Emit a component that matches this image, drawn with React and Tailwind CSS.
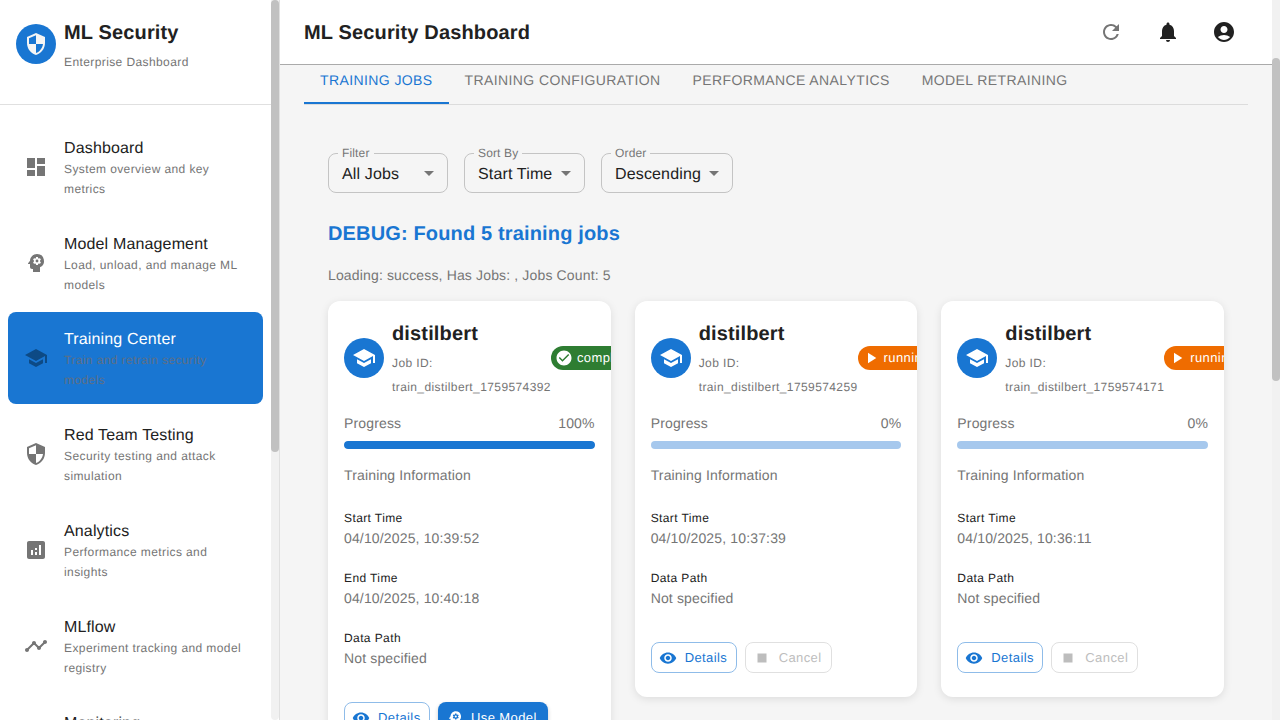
import React from 'react';
import {
  MdDashboard, MdPsychology, MdSchool, MdSecurity, MdAnalytics, MdTimeline, MdMonitorHeart,
  MdRefresh, MdNotifications, MdAccountCircle, MdVisibility, MdStop, MdPlayArrow, MdCheckCircle, MdArrowDropDown,
} from 'react-icons/md';

const navItems = [
  { icon: MdDashboard, title: 'Dashboard', sub: 'System overview and key metrics' },
  { icon: MdPsychology, title: 'Model Management', sub: 'Load, unload, and manage ML models' },
  { icon: MdSchool, title: 'Training Center', sub: 'Train and retrain security models', active: true },
  { icon: MdSecurity, title: 'Red Team Testing', sub: 'Security testing and attack simulation' },
  { icon: MdAnalytics, title: 'Analytics', sub: 'Performance metrics and insights' },
  { icon: MdTimeline, title: 'MLflow', sub: 'Experiment tracking and model registry' },
  { icon: MdMonitorHeart, title: 'Monitoring', sub: 'System health and live metrics' },
];

const jobs = [
  {
    id: 'train_distilbert_1759574392', status: 'completed', progress: 100,
    info: [['Start Time', '04/10/2025, 10:39:52'], ['End Time', '04/10/2025, 10:40:18'], ['Data Path', 'Not specified']],
  },
  {
    id: 'train_distilbert_1759574259', status: 'running', progress: 0,
    info: [['Start Time', '04/10/2025, 10:37:39'], ['Data Path', 'Not specified']],
  },
  {
    id: 'train_distilbert_1759574171', status: 'running', progress: 0,
    info: [['Start Time', '04/10/2025, 10:36:11'], ['Data Path', 'Not specified']],
  },
];

function NavItem({ icon: Icon, title, sub, active }) {
  return (
    <div className={`flex h-[92px] shrink-0 items-center rounded-lg pl-4 pr-4 ${active ? 'bg-[#1976d2]' : ''}`}>
      <div className="flex w-10 shrink-0 items-center">
        <Icon size={24} className={active ? 'text-[#0d4a85]' : 'text-[#757575]'} />
      </div>
      <div className="min-w-0 flex-1 self-start pt-[18px]">
        <div className={`text-base leading-[19.9px] tracking-[0.15px] ${active ? 'text-white' : 'text-[#212121]'}`}>{title}</div>
        <div className={`text-xs leading-5 tracking-[0.4px] ${active ? 'text-[#5f6f85]' : 'text-[#757575]'}`}>{sub}</div>
      </div>
    </div>
  );
}

function Sidebar() {
  return (
    <aside className="flex h-full w-[280px] shrink-0 border-r border-[#e0e0e0] bg-white">
      <div className="flex min-w-0 flex-1 flex-col overflow-hidden">
        <div className="flex h-[105px] shrink-0 items-start gap-2 border-b border-[#e0e0e0] pl-4 pt-4">
          <div className="mt-2 flex h-10 w-10 shrink-0 items-center justify-center rounded-full bg-[#1976d2]">
            <MdSecurity size={24} className="text-[#f5f5f5]" />
          </div>
          <div>
            <div className="pt-[2px] text-xl font-semibold leading-[30px] tracking-[0.15px] text-[#212121]">ML Security</div>
            <div className="mt-[4px] text-xs leading-5 tracking-[0.4px] text-[#757575]">Enterprise Dashboard</div>
          </div>
        </div>
        <nav className="flex flex-col gap-[3.8px] px-2 pt-[15.8px]">
          {navItems.map((item) => <NavItem key={item.title} {...item} />)}
        </nav>
      </div>
      <div className="h-full w-2 shrink-0 rounded-b bg-[#f1f1f1]">
        <div className="h-[452px] w-2 rounded bg-[#c1c1c1]" />
      </div>
    </aside>
  );
}

function Header() {
  return (
    <header className="z-10 flex h-[65px] shrink-0 items-center justify-between border-b border-[#aaaaaa] bg-white pl-6 pr-7">
      <h1 className="pt-[2px] text-xl font-semibold tracking-[0.15px] text-[#212121]">ML Security Dashboard</h1>
      <div className="flex items-center gap-4">
        <div className="mr-[1px] flex h-10 w-10 items-center justify-center"><MdRefresh size={24} className="text-[#757575]" /></div>
        <div className="flex h-10 w-10 items-center justify-center"><MdNotifications size={24} className="text-[#212121]" /></div>
        <div className="flex h-10 w-10 items-center justify-center"><MdAccountCircle size={24} className="text-[#212121]" /></div>
      </div>
    </header>
  );
}

function Tabs() {
  const tabs = ['Training Jobs', 'Training Configuration', 'Performance Analytics', 'Model Retraining'];
  return (
    <div className="flex h-[40px] shrink-0 border-b border-[#dcdcdc]">
      {tabs.map((t, i) => (
        <div
          key={t}
          className={`flex h-[39px] items-start px-4 pt-[5px] text-sm uppercase leading-5 tracking-[0.4px] ${i === 0 ? 'border-b-2 border-[#1976d2] text-[#1976d2]' : 'text-[#757575]'}`}
        >
          {t}
        </div>
      ))}
    </div>
  );
}

function Select({ label, value, width }) {
  return (
    <div className={`relative flex h-10 items-center justify-between rounded-lg border border-[#c4c4c4] pl-[13px] pr-[6px] ${width}`}>
      <span className="absolute -top-[8px] left-[9px] bg-[#f5f5f5] px-[4px] text-xs leading-[14px] tracking-[0.15px] text-[#757575]">{label}</span>
      <span className="pt-[4px] text-base tracking-[0.15px] text-[#212121]">{value}</span>
      <MdArrowDropDown size={24} className="text-[#757575]" />
    </div>
  );
}

function OutlinedButton({ icon: Icon, children, disabled }) {
  return (
    <div className={`flex h-[31px] items-center gap-2 rounded-lg border pl-[7px] text-[13px] tracking-[0.4px] ${disabled ? 'w-[87px] border-[#e0e0e0] text-[#bdbdbd]' : 'w-[86px] border-[#8fbce9] text-[#1976d2]'}`}>
      <Icon size={18} />
      <span>{children}</span>
    </div>
  );
}

function StatusChip({ status }) {
  const done = status === 'completed';
  return (
    <div className={`flex h-6 shrink-0 items-center gap-1 rounded-full pl-1 pr-3 text-[13px] tracking-[0.4px] text-white ${done ? 'bg-[#2e7d32]' : 'bg-[#ef6c00]'}`}>
      {done ? <MdCheckCircle size={18} /> : <MdPlayArrow size={18} />}
      <span>{status}</span>
    </div>
  );
}

function JobCard({ job }) {
  const done = job.status === 'completed';
  return (
    <div className="overflow-hidden rounded-xl bg-white px-4 pb-6 pt-4 shadow-[0_2px_8px_rgba(0,0,0,0.1)]">
      <div className="flex w-[300px] items-center">
        <div className="flex h-10 w-10 shrink-0 items-center justify-center rounded-full bg-[#1976d2]">
          <MdSchool size={24} className="text-white" />
        </div>
        <div className="ml-2 shrink-0">
          <div className="pt-[2px] text-xl font-semibold leading-[30px] tracking-[0.15px] text-[#212121]">distilbert</div>
          <div className="mt-[2px] text-xs leading-6 tracking-[0.4px] text-[#757575]">Job ID:</div>
          <div className="text-xs leading-6 tracking-[0.4px] text-[#757575]">{job.id}</div>
        </div>
        <StatusChip status={job.status} />
      </div>

      <div className="mt-4 flex h-4 items-center justify-between text-sm tracking-[0.15px] text-[#757575]">
        <span>Progress</span>
        <span>{job.progress}%</span>
      </div>
      <div className="mt-[10px] h-2 overflow-hidden rounded bg-[#a6c8ed]">
        <div className="h-full rounded bg-[#1976d2]" style={{ width: `${job.progress}%` }} />
      </div>

      <div className="mt-[14px] text-sm leading-6 tracking-[0.15px] text-[#757575]">Training Information</div>

      <div className="mt-[21px] flex flex-col gap-5">
        {job.info.map(([k, v]) => (
          <div key={k}>
            <div className="text-xs leading-5 tracking-[0.4px] text-[#212121]">{k}</div>
            <div className="text-sm leading-5 tracking-[0.15px] text-[#757575]">{v}</div>
          </div>
        ))}
      </div>

      <div className="mt-[34px] flex gap-2">
        <OutlinedButton icon={MdVisibility}>Details</OutlinedButton>
        {done ? (
          <div className="flex h-[31px] w-[110px] items-center gap-[7px] rounded-lg bg-[#1976d2] pl-[8px] text-[13px] tracking-[0.4px] text-white shadow-[0_2px_4px_rgba(0,0,0,0.2)]">
            <MdPsychology size={18} />
            <span>Use Model</span>
          </div>
        ) : (
          <OutlinedButton icon={MdStop} disabled>Cancel</OutlinedButton>
        )}
      </div>
    </div>
  );
}

function Main() {
  return (
    <div className="flex min-w-0 flex-1 flex-col overflow-hidden bg-[#f5f5f5]">
      <Header />
      <div className="flex flex-1 flex-col overflow-hidden px-6">
        <Tabs />
        <div className="px-6 pt-[48px]">
          <div className="flex gap-4">
            <Select label="Filter" value="All Jobs" width="w-[120px]" />
            <Select label="Sort By" value="Start Time" width="w-[121px]" />
            <Select label="Order" value="Descending" width="w-[132px]" />
          </div>
          <h2 className="mt-6 pt-[2px] text-xl font-semibold leading-[30px] tracking-[0.15px] text-[#1976d2]">DEBUG: Found 5 training jobs</h2>
          <p className="mt-4 text-sm leading-5 tracking-[0.15px] text-[#757575]">Loading: success, Has Jobs: , Jobs Count: 5</p>
          <div className="mt-4 grid grid-cols-3 items-start gap-6">
            {jobs.map((j) => <JobCard key={j.id} job={j} />)}
          </div>
        </div>
      </div>
    </div>
  );
}

export default function App() {
  return (
    <div className="flex h-[720px] w-[1280px] overflow-hidden bg-[#f5f5f5] font-['Liberation_Sans',Arial,sans-serif] [text-rendering:geometricPrecision]">
      <Sidebar />
      <Main />
      <div className="h-full w-2 shrink-0 bg-[#f1f1f1] pt-[58px]">
        <div className="h-[323px] w-2 rounded bg-[#c1c1c1]" />
      </div>
    </div>
  );
}
